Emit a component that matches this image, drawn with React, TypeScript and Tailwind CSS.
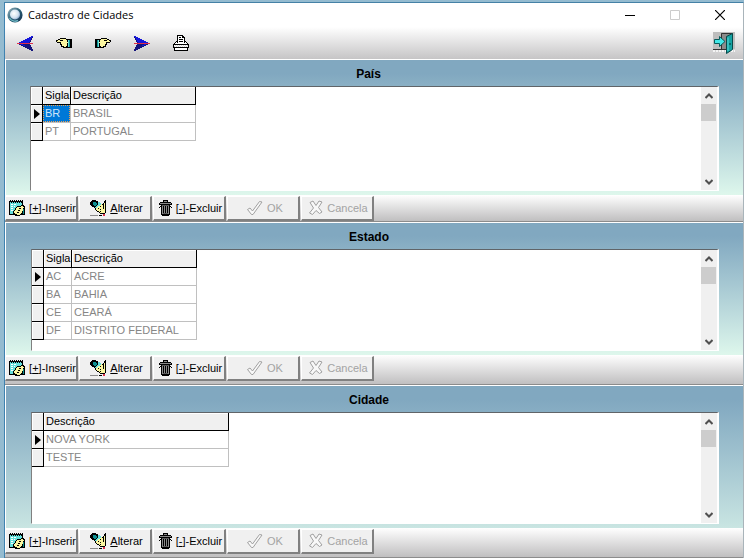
import React from "react";

const palette: Record<string, string> = {
  k: "#000000",
  y: "#fbf6a0",
  c: "#66e0dc",
  t: "#0b8f90",
  w: "#ffffff",
  g: "#8a8a8a",
  l: "#d8d8d8",
  r: "#e0304a",
  n: "#5a5a5a",
  b: "#1616dc",
  d: "#14147c",
};

const handArt = [
  "....kkkkkk......",
  "..kkyyyyyykkkkkk",
  "kkyykkkyyyykctkk",
  "kyyyyyyyyyykctkk",
  ".kkkkyyyyyyyctkk",
  "....kyyyyyykctkk",
  "....kkyyyyykctkk",
  ".....kyyyyykctkk",
  ".....kkkyykkctkk",
  ".......kkkkkkkkk",
];

const arrowArt = [
  "..............bb",
  "............bbbd",
  "..........bbbbd.",
  "........bbbbbbd.",
  "......bbbbbbbd..",
  "....bbbbbbbbbd..",
  "..bbbbbbbbbbd...",
  "rrrrrrrrrrrrrrrr",
  "..ddbbddddddd...",
  "....ddbbdddddd..",
  "......dddddddd..",
  "........ddddddd.",
  "..........ddddd.",
  "............dddd",
  "..............dd",
];

const printerArt = [
  "....kkkkkk......",
  "....kwwwwkk.....",
  "....kwkkwkkk....",
  "....kwwwwwwk....",
  "....kwkkkkwk....",
  "....kwwwwwwk....",
  "...kkwkkkkwkk...",
  "..kwkwwwwwwkwk..",
  ".kwwwwwwwwwwwwk.",
  "kkkkkkkkkkkkkkkk",
  "kwlwlwlwlwlwlwlk",
  "klwlwlwlwlwlwlwk",
  "kkkkkkkkkkkkkkkk",
  ".kwwwwwwwwwwwwk.",
  ".kwwwwwwwwwwwwk.",
  ".kkkkkkkkkkkkkk.",
];

const noteArt = [
  ".k.k.k.k.k.k.k..",
  "kkkkkkkkkkkkkk..",
  "kckckckckckckk..",
  "kcccccccccccck..",
  "kcwwcwwcccccck..",
  "kccccccccccckkk.",
  "kcwwcwcckkkkyykk",
  "kcccccckyyyyyyyk",
  "kcwwcckyyykkyykk",
  "kccccckyyyyyyytk",
  "kcwwckyyykkyyytk",
  "kccckyyyyyyyyktk",
  "kccckyyykkyyyktk",
  "kccckkyyyyyykktk",
  "kkkkkkkkyyykkkkk",
  "......kkkkk.....",
];

const editArt = [
  "..kkkk.........k",
  ".kkkkkkk......kk",
  "kkktttkkcc....kk",
  "kkkttttkccc..kyk",
  "kkkttttkcccykkyk",
  ".kkkttkcccyyykyk",
  "..kkkkccyykyykyk",
  "....kccyyyyyykyk",
  ".....kyykyyyykyk",
  ".....kyyyykyyyyk",
  "......kyyyyyyyyk",
  ".......kkykyyyyk",
  ".........kyyyyyk",
  "..........kkkkk.",
  ".............rr.",
  "gggggggg.kkk.rr.",
];

const trashArt = [
  "....kkkkk....",
  "....kgggk....",
  ".kkkkkkkkkkk.",
  "kgggggggggggk",
  "kkkkkkkkkkkkk",
  "..knnnnnnnk..",
  ".kkgkgkgkgkk.",
  "k.kgkgkgkgk.k",
  "..kgkgkgkgk..",
  "..kgkgkgkgk..",
  "..kgkgkgkgk..",
  "..kgkgkgkgk..",
  "..kgkgkgkgk..",
  "..kgnnnnngk..",
  "..kkkkkkkkk..",
  "...kkkkkkk...",
];

function PixelIcon({ art, flip = false }: { art: string[]; flip?: boolean }) {
  const width = art[0].length;
  return (
    <svg
      width={width}
      height={art.length}
      viewBox={`0 0 ${width} ${art.length}`}
      shapeRendering="crispEdges"
      className="shrink-0"
      aria-hidden="true"
    >
      {art.flatMap((row, y) =>
        row.split("").map((c, x) =>
          c === "." ? null : (
            <rect key={`${x}-${y}`} x={flip ? width - 1 - x : x} y={y} width="1" height="1" fill={palette[c]} />
          ),
        ),
      )}
    </svg>
  );
}

function OrbIcon() {
  return (
    <svg width="16" height="16" viewBox="0 0 16 16" className="shrink-0" aria-hidden="true">
      <defs>
        <linearGradient id="ring" x1="0" y1="0" x2="1" y2="1">
          <stop offset="0" stopColor="#9fb6c0" />
          <stop offset="0.5" stopColor="#2b6278" />
          <stop offset="1" stopColor="#13294a" />
        </linearGradient>
        <radialGradient id="core" cx="0.4" cy="0.4" r="0.7">
          <stop offset="0" stopColor="#ffffff" />
          <stop offset="0.6" stopColor="#d3e2f0" />
          <stop offset="1" stopColor="#7f9cc8" />
        </radialGradient>
      </defs>
      <circle cx="8" cy="8" r="7.6" fill="url(#ring)" />
      <circle cx="8" cy="7.5" r="5" fill="url(#core)" />
      <path d="M2.500 11 A6.500 6.500 0 0 0 11 13.500" stroke="#6fb8c4" strokeWidth="1.4" fill="none" />
    </svg>
  );
}

function DoorIcon() {
  return (
    <svg width="22" height="22" viewBox="0 0 22 22" className="shrink-0" aria-hidden="true">
      <rect width="22" height="17" fill="#bdbdbd" />
      <rect x="8" y="1" width="12" height="16" fill="#8b8b8b" />
      <path d="M0 17.5H8.500V1.500H19.500M8 17.500H13" stroke="#333" fill="none" />
      <path d="M0 19h14M18 19h4" stroke="#f4f4f4" strokeWidth="2" strokeDasharray="2 1" />
      <path d="M13.500 4.500L19.500 1.500V17.500L13.500 21.500Z" fill="#15a3a3" stroke="#064949" />
      <path d="M15 5.500V19" stroke="#55dcdc" />
      <path d="M17 11v2" stroke="#033" />
      <path d="M1.500 7.500H6.500V4.500L12 9.500L6.500 14.500V11.500H1.500Z" fill="#43e8e8" stroke="#075a5a" />
    </svg>
  );
}

function CheckIcon() {
  return (
    <svg width="17" height="16" viewBox="0 0 17 16" className="shrink-0" aria-hidden="true">
      <path d="M1.500 9.500L4 8L6.500 11L13.500 1.500L16 2L7 14.500H5.500Z" fill="#f8f8f8" stroke="#a0a0a0" />
    </svg>
  );
}

function CrossIcon() {
  return (
    <svg width="14" height="16" viewBox="0 0 14 16" className="shrink-0" aria-hidden="true">
      <path
        d="M1 2.500L4 1L7 5.500L10 1L13 2L9.500 7.500L13 12L10.500 13.500L7 10.500L3.500 14.500L.5 13L4.500 8Z"
        fill="#f8f8f8"
        stroke="#a0a0a0"
      />
    </svg>
  );
}

function TitleBar() {
  return (
    <header className="flex h-6 items-center bg-white pl-[2px]">
      <OrbIcon />
      <h1 className="ml-[5px] flex-1 font-['Open_Sans','Noto_Sans',sans-serif] text-[11px] leading-4 text-black">
        Cadastro de Cidades
      </h1>
      <button type="button" aria-label="Minimizar" className="flex h-6 w-[46px] items-center justify-center">
        <svg width="10" height="10" viewBox="0 0 10 10"><path d="M0 5.500H10" stroke="#000" /></svg>
      </button>
      <button type="button" aria-label="Maximizar" disabled className="flex h-6 w-[44px] items-center justify-center">
        <svg width="10" height="10" viewBox="0 0 10 10"><path d="M.5.5H9.500V9.500H.5Z" fill="none" stroke="#ccc" /></svg>
      </button>
      <button type="button" aria-label="Fechar" className="flex h-6 w-[46px] items-center justify-center">
        <svg width="10" height="10" viewBox="0 0 10 10"><path d="M0 0L10 10M10 0L0 10" stroke="#000" strokeWidth="1.200" /></svg>
      </button>
    </header>
  );
}

function ToolButton({ label, children }: { label: string; children: React.ReactNode }) {
  return (
    <button type="button" aria-label={label} className="flex h-8 w-[39px] items-center justify-center">
      {children}
    </button>
  );
}

function Toolbar() {
  return (
    <nav className="flex h-8 items-center bg-linear-to-b from-white to-[#c6c5c6]">
      <ToolButton label="Primeiro"><PixelIcon art={arrowArt} /></ToolButton>
      <ToolButton label="Anterior"><PixelIcon art={handArt} /></ToolButton>
      <ToolButton label="Próximo"><PixelIcon art={handArt} flip /></ToolButton>
      <ToolButton label="Último"><PixelIcon art={arrowArt} flip /></ToolButton>
      <ToolButton label="Imprimir"><PixelIcon art={printerArt} /></ToolButton>
      <button type="button" aria-label="Sair" className="mr-2 ml-auto">
        <DoorIcon />
      </button>
    </nav>
  );
}

function Chevron({ down = false }: { down?: boolean }) {
  return (
    <svg width="8" height="6" viewBox="0 0 8 6" aria-hidden="true">
      <path d={down ? "M.5 1L4 4.500L7.500 1" : "M.5 5L4 1.500L7.500 5"} fill="none" stroke="#505050" strokeWidth="2" />
    </svg>
  );
}

function ScrollBar() {
  return (
    <div className="flex w-4 shrink-0 flex-col bg-[#f0f0f0]">
      <button type="button" aria-label="Rolar para cima" className="flex h-[17px] items-center justify-center">
        <Chevron />
      </button>
      <div className="mr-px h-[17px] bg-[#cdcdcd]" />
      <button type="button" aria-label="Rolar para baixo" className="mt-auto flex h-[17px] items-center justify-center">
        <Chevron down />
      </button>
    </div>
  );
}

type Column = { label: string; width: string };

const headCell =
  "h-[18px] border-r border-b border-black bg-[#f0f0f0] p-0 pl-[2px] text-left font-normal text-black shadow-[inset_1px_1px_0_#fff]";

function DataGrid({ title, columns, rows, selected }: { title: string; columns: Column[]; rows: string[][]; selected?: boolean }) {
  return (
    <table
      aria-label={title}
      className="table-fixed border-separate border-spacing-0 self-start text-[11px] leading-[17px] whitespace-nowrap"
    >
      <thead>
        <tr>
          <th className={`${headCell} w-3`} aria-label="Registro atual" />
          {columns.map((c) => (
            <th key={c.label} scope="col" className={`${headCell} ${c.width}`}>{c.label}</th>
          ))}
        </tr>
      </thead>
      <tbody>
        {rows.map((row, r) => (
          <tr key={row.join()}>
            <td className={`${headCell} w-3`}>
              {r === 0 && (
                <svg width="7" height="10" viewBox="0 0 7 10" className="ml-px block" aria-hidden="true">
                  <path d="M0 0L6 5L0 10Z" />
                </svg>
              )}
            </td>
            {row.map((cell, i) => (
              <td key={cell} className="h-[18px] border-r border-b border-[#c0c0c0] p-0 text-[#868686]">
                {selected && r === 0 && i === 0 ? (
                  <span className="block h-[17px] border border-dotted border-[#f0a050] bg-[#0078d7] pl-px leading-[15px] text-[#cfe6fa]">
                    {cell}
                  </span>
                ) : (
                  <span className="block pl-[2px]">{cell}</span>
                )}
              </td>
            ))}
          </tr>
        ))}
      </tbody>
    </table>
  );
}

function ActionButton({ icon, disabled, children }: { icon: React.ReactNode; disabled?: boolean; children: React.ReactNode }) {
  return (
    <button
      type="button"
      disabled={disabled}
      className="flex h-[25px] w-[73px] items-center justify-center gap-1 border-t border-r-2 border-b-2 border-l border-t-white border-r-[#808080] border-b-[#808080] border-l-white bg-[#f0f0f0] pl-[3px] text-[11px] leading-4 whitespace-nowrap text-black disabled:text-[#a3a3a3]"
    >
      {icon}
      <span>{children}</span>
    </button>
  );
}

function ActionBar({ height }: { height: string }) {
  return (
    <div className={`flex shrink-0 items-start gap-px border-b border-[#8c8c8c] bg-linear-to-b from-white to-[#c0bfc0] pt-px ${height}`}>
      <ActionButton icon={<PixelIcon art={noteArt} />}>[<u>+</u>]-Inserir</ActionButton>
      <ActionButton icon={<PixelIcon art={editArt} />}><u>A</u>lterar</ActionButton>
      <ActionButton icon={<PixelIcon art={trashArt} />}>[<u>-</u>]-Excluir</ActionButton>
      <ActionButton icon={<CheckIcon />} disabled>OK</ActionButton>
      <ActionButton icon={<CrossIcon />} disabled>Cancela</ActionButton>
    </div>
  );
}

type SectionProps = {
  title: string;
  columns: Column[];
  rows: string[][];
  selected?: boolean;
  gridHeight: string;
  inset: string;
  barHeight: string;
  fade: string;
};

function Section({ title, columns, rows, selected, gridHeight, inset, barHeight, fade }: SectionProps) {
  return (
    <section>
      <div className={`border-t border-l border-white bg-linear-to-b from-[#81a8c0] from-10% pr-6 pb-1 ${inset} ${fade}`}>
        <h2 className="pt-[6px] pr-3 pb-[3px] text-center text-[12px] leading-[17px] font-bold text-black">{title}</h2>
        <div className={`flex justify-between border-t border-r-2 border-b border-l border-t-[#606468] border-r-white border-b-white border-l-[#808080] bg-white ${gridHeight}`}>
          <DataGrid title={title} columns={columns} rows={rows} selected={selected} />
          <ScrollBar />
        </div>
      </div>
      <ActionBar height={barHeight} />
    </section>
  );
}

export default function App() {
  return (
    <div className="min-h-screen bg-[#94bbd0] pt-[2px] pl-1 font-['Liberation_Sans',Arial,sans-serif]">
      <div className="border-t border-r border-l border-t-[#4481a6] border-r-[#a9b4ba] border-l-[#3f82b0] bg-[#c0bfc0]">
        <TitleBar />
        <Toolbar />
        <main>
          <Section
            title="País"
            columns={[{ label: "Sigla", width: "w-7" }, { label: "Descrição", width: "w-[125px]" }]}
            rows={[["BR", "BRASIL"], ["PT", "PORTUGAL"]]}
            selected
            gridHeight="h-[105px]"
            inset="pl-6"
            barHeight="h-[27px]"
            fade="to-[#def7ec]"
          />
          <Section
            title="Estado"
            columns={[{ label: "Sigla", width: "w-7" }, { label: "Descrição", width: "w-[125px]" }]}
            rows={[["AC", "ACRE"], ["BA", "BAHIA"], ["CE", "CEARÁ"], ["DF", "DISTRITO FEDERAL"]]}
            gridHeight="h-[102px]"
            inset="pl-[25px]"
            barHeight="h-[30px]"
            fade="to-[#def7ec]"
          />
          <Section
            title="Cidade"
            columns={[{ label: "Descrição", width: "w-[185px]" }]}
            rows={[["NOVA YORK"], ["TESTE"]]}
            gridHeight="h-[112px]"
            inset="pl-[25px]"
            barHeight="h-[30px]"
            fade="to-[#c9e5e2]"
          />
        </main>
      </div>
    </div>
  );
}
